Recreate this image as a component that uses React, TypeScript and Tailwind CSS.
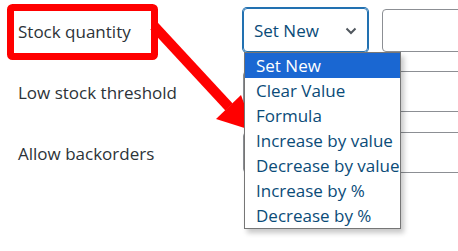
import React from 'react';

const options = [
  'Set New',
  'Clear Value',
  'Formula',
  'Increase by value',
  'Decrease by value',
  'Increase by %',
  'Decrease by %',
];

const Annotation: React.FC = () => (
  <svg className="absolute left-0 top-0 pointer-events-none" width="458" height="251" viewBox="0 0 458 251">
    <rect x="10.5" y="7.5" width="144" height="49" rx="2" fill="none" stroke="#ff0000" strokeWidth="7" />
    <line x1="154" y1="26" x2="229" y2="107" stroke="#ff0000" strokeWidth="10" />
    <polygon points="216,119 241,95 254,131" fill="#ff0000" />
  </svg>
);

export default function App() {
  return (
    <div
      className="relative w-[458px] h-[251px] overflow-hidden bg-white text-[17px] text-[#2c3338]"
      style={{ fontFamily: '"Open Sans", "Noto Sans", sans-serif' }}
    >
      <div className="grid grid-cols-[243px_1fr] pt-[8px]">
        {/* row 1 */}
        <div className="flex items-center h-[44px] pt-[4px] pl-[18px]">Stock quantity</div>
        <div className="flex gap-[14px] h-[44px]">
          <div className="relative w-[125px] shrink-0">
            <div className="flex items-center justify-between h-full pt-[2px] pl-[10px] pr-[10px] rounded-[4px] border border-[#2271b1] shadow-[0_0_0_1px_#2271b1] text-[#0a4b78]">
              <span>Set New</span>
              <svg width="12" height="8" viewBox="0 0 12 8">
                <path d="M1.5 1.5 L6 6 L10.5 1.5" fill="none" stroke="#50575e" strokeWidth="2" />
              </svg>
            </div>
            <ul className="absolute left-[1px] top-[44px] z-10 w-[157px] border border-[#767676] bg-white shadow-[3px_4px_5px_rgba(0,0,0,0.22)] text-[#0a4b78]">
              {options.map((o, i) => (
                <li
                  key={o}
                  className={
                    i === 0
                      ? 'h-[25px] leading-[25px] pl-[11px] bg-[#1a67d2] text-white whitespace-nowrap'
                      : 'h-[25px] leading-[25px] pl-[11px] whitespace-nowrap'
                  }
                >
                  {o}
                </li>
              ))}
            </ul>
          </div>
          <div className="w-[120px] shrink-0 h-[43px] mt-[1px] rounded-[4px] border border-[#8c8f94]" />
        </div>

        {/* row 2 */}
        <div className="flex items-center h-[41px] mt-[19px] pt-[2px] pl-[18px]">Low stock threshold</div>
        <div className="h-[41px] mt-[19px] w-[260px] rounded-[4px] border border-[#8c8f94]" />

        {/* row 3 */}
        <div className="flex items-center h-[41px] mt-[20px] pt-[3px] pl-[18px]">Allow backorders</div>
        <div className="h-[41px] mt-[20px] w-[260px] rounded-[4px] border border-[#8c8f94]" />
      </div>
      <Annotation />
    </div>
  );
}
